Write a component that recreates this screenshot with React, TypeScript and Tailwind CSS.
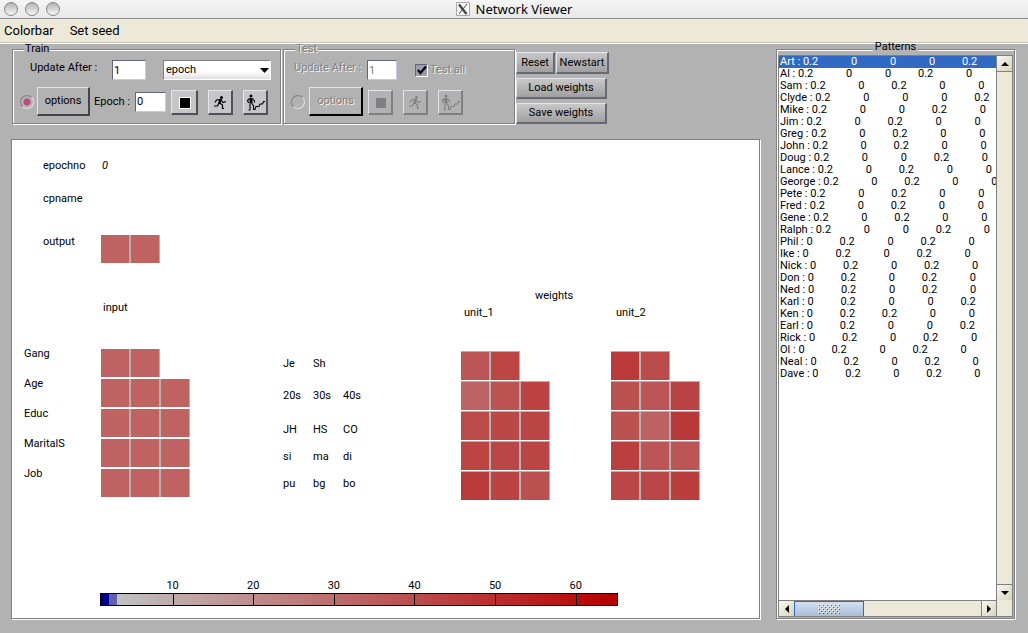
import React, { useState } from 'react';
import clsx from 'clsx';

const patterns: { name: string; values: string[] }[] = [
  { name: 'Art', values: ['0.2', '0', '0', '0', '0.2'] },
  { name: 'Al', values: ['0.2', '0', '0', '0.2', '0'] },
  { name: 'Sam', values: ['0.2', '0', '0.2', '0', '0'] },
  { name: 'Clyde', values: ['0.2', '0', '0', '0', '0.2'] },
  { name: 'Mike', values: ['0.2', '0', '0', '0.2', '0'] },
  { name: 'Jim', values: ['0.2', '0', '0.2', '0', '0'] },
  { name: 'Greg', values: ['0.2', '0', '0.2', '0', '0'] },
  { name: 'John', values: ['0.2', '0', '0.2', '0', '0'] },
  { name: 'Doug', values: ['0.2', '0', '0', '0.2', '0'] },
  { name: 'Lance', values: ['0.2', '0', '0.2', '0', '0'] },
  { name: 'George', values: ['0.2', '0', '0.2', '0', '0'] },
  { name: 'Pete', values: ['0.2', '0', '0.2', '0', '0'] },
  { name: 'Fred', values: ['0.2', '0', '0.2', '0', '0'] },
  { name: 'Gene', values: ['0.2', '0', '0.2', '0', '0'] },
  { name: 'Ralph', values: ['0.2', '0', '0', '0.2', '0'] },
  { name: 'Phil', values: ['0', '0.2', '0', '0.2', '0'] },
  { name: 'Ike', values: ['0', '0.2', '0', '0.2', '0'] },
  { name: 'Nick', values: ['0', '0.2', '0', '0.2', '0'] },
  { name: 'Don', values: ['0', '0.2', '0', '0.2', '0'] },
  { name: 'Ned', values: ['0', '0.2', '0', '0.2', '0'] },
  { name: 'Karl', values: ['0', '0.2', '0', '0', '0.2'] },
  { name: 'Ken', values: ['0', '0.2', '0.2', '0', '0'] },
  { name: 'Earl', values: ['0', '0.2', '0', '0', '0.2'] },
  { name: 'Rick', values: ['0', '0.2', '0', '0.2', '0'] },
  { name: 'Ol', values: ['0', '0.2', '0', '0.2', '0'] },
  { name: 'Neal', values: ['0', '0.2', '0', '0.2', '0'] },
  { name: 'Dave', values: ['0', '0.2', '0', '0.2', '0'] },
];

const REST = '#be6362';

const inputUnits = [
  [REST, REST],
  [REST, REST, REST],
  [REST, REST, REST],
  [REST, REST, REST],
  [REST, REST, REST],
];

const unit1 = [
  ['#bc5556', '#bd4645'],
  ['#bd6363', '#bc5251', '#bb4142'],
  ['#bb4b4b', '#bb4747', '#bb4545'],
  ['#bc4544', '#bb4647', '#bb4444'],
  ['#ba3b3b', '#bb4243', '#bb5050'],
];

const unit2 = [
  ['#b93a39', '#bb4b4b'],
  ['#bb5051', '#bc5556', '#ba4243'],
  ['#bb5252', '#bc6262', '#b93938'],
  ['#ba4040', '#bc5555', '#bc5556'],
  ['#bb4647', '#bb4647', '#ba3e3e'],
];

const groups = ['Gang', 'Age', 'Educ', 'MaritalS', 'Job'];

const unitNames = [
  { names: ['Je', 'Sh'], height: 'h-8' },
  { names: ['20s', '30s', '40s'], height: 'h-[34px]' },
  { names: ['JH', 'HS', 'CO'], height: 'h-[27px]' },
  { names: ['si', 'ma', 'di'], height: 'h-[27px]' },
  { names: ['pu', 'bg', 'bo'], height: 'h-[27px]' },
];

const COLORS = 64;
const ticks = [10, 20, 30, 40, 50, 60];

// two blue entries for negative values, then grey fading to red
const colorAt = (i: number) => {
  if (i === 0) return '#000090';
  if (i === 1) return '#6060ac';
  const t = (i - 2) / (COLORS - 3);
  const fade = Math.round(192 * (1 - t));
  return `rgb(${Math.round(192 - 8 * t)}, ${fade}, ${fade})`;
};

const Matrix: React.FC<{ rows: string[][]; topLine?: boolean }> = ({ rows, topLine }) => (
  <div className={clsx('flex flex-col items-start', topLine ? 'gap-px' : 'gap-0.5')}>
    {rows.map((row, r) => (
      <div
        key={r}
        className={clsx('flex gap-0.5 bg-[#b2b2b2] pr-px', topLine && 'border-t border-[#b2b2b2]')}
      >
        {row.map((color, c) => (
          <div key={c} className="size-7" style={{ backgroundColor: color }} />
        ))}
      </div>
    ))}
  </div>
);

const StopIcon = () => (
  <svg className="size-[19px]" viewBox="0 0 19 19" shapeRendering="crispEdges" aria-hidden="true">
    <path d="M4 4h12v12H4z" fill="#fff" className="group-disabled:opacity-0" />
    <path d="M5 5h10v10H5z" fill="currentColor" />
  </svg>
);

const RunIcon = () => (
  <svg className="size-[17px]" viewBox="0 0 17 17" aria-hidden="true">
    <circle cx="9.5" cy="3.500" r="1.5" fill="currentColor" />
    <path
      d="M8 5.500L4.500 6L3 8.500M9 6L11 8.500L14 7.500M7.500 9L10.500 11V14.500H12M7 9L5.500 11.800L2 12"
      fill="none"
      stroke="currentColor"
      strokeWidth="1.2"
    />
    <path d="M7 5h2.800l-1.300 5H6.200z" fill="currentColor" />
  </svg>
);

const StepIcon = () => (
  <svg className="size-[21px]" viewBox="0 0 21 21" aria-hidden="true">
    <circle cx="6" cy="4" r="1.5" fill="currentColor" />
    <path d="M4.500 6h3v5.500h-3z" fill="currentColor" />
    <path
      d="M4.500 6.500L2.500 8.500L3.500 11M7.500 6.500L9.500 9V10.500M5 11.500V18H3.500M7 11.500L8.500 14V17.500H10.500"
      fill="none"
      stroke="currentColor"
      strokeWidth="1.1"
    />
    <path
      d="M10 17L11 14.500H14L15 12H17.500L18.500 9.500H20"
      fill="none"
      stroke="currentColor"
      strokeWidth="1.1"
    />
  </svg>
);

const raised =
  'border-t border-l border-r-2 border-b-2 border-t-[#e4e4ee] border-l-[#e4e4ee] flex items-center justify-center';
const inputStyle =
  'h-5 border bg-white px-px text-[11px] outline-none border-t-[#62667c] border-l-[#62667c] border-r-[#c4c9e4] border-b-[#c4c9e4] disabled:text-[#808080]';
const groupBox = 'h-20 shrink-0 border border-[#808080] pl-[7px] shadow-[inset_1px_1px_0_#fff,1px_1px_0_#fff]';
const legendStyle = 'ml-1 h-2.5 bg-[#b2b2b2] px-px leading-2.5';
const radioStyle =
  'size-3.5 appearance-none rounded-full border border-[#808080] border-r-[#e0e0e0] border-b-[#e0e0e0] checked:bg-[radial-gradient(circle,#c04a7c_3px,#b2b2b2_4px)] disabled:border-[#808080]';
const ghost = 'text-[#808080] [text-shadow:1px_1px_0_#f4f4f4]';

const IconButton: React.FC<{
  label: string;
  wide?: boolean;
  disabled?: boolean;
  children: React.ReactNode;
}> = ({ label, wide, disabled, children }) => (
  <button
    type="button"
    aria-label={label}
    disabled={disabled}
    className={clsx(
      raised,
      'group h-[25px] border-r-[#50505c] border-b-[#50505c] bg-[#c6c6c8] text-black disabled:border-r-[#808080] disabled:border-b-[#808080] disabled:bg-[#b2b2b2] disabled:text-[#808080]',
      wide ? 'w-[27px]' : 'w-[25px]'
    )}
  >
    {children}
  </button>
);

const ActionButton: React.FC<{ className: string; children: React.ReactNode }> = ({
  className,
  children,
}) => (
  <button
    type="button"
    className={clsx(
      raised,
      'border-r-[#666874] border-b-[#666874] bg-linear-to-b from-[#c8c8c8] to-[#a0a0a0]',
      className
    )}
  >
    {children}
  </button>
);

const TitleBar = () => (
  <header className="flex h-[19px] items-center border-b border-[#8c8c8c] bg-linear-to-b from-[#f4f4f4] to-[#e8e8e8] px-1">
    <div className="flex flex-1 gap-[7px]">
      {['Close', 'Minimize', 'Zoom'].map((name) => (
        <button
          key={name}
          type="button"
          aria-label={name}
          className="size-3.5 rounded-full border border-[#858585] bg-linear-to-b from-[#b4b4b4] to-[#f8f8f8]"
        />
      ))}
    </div>
    <div className="flex items-center gap-1.5">
      <svg className="size-3.5" viewBox="0 0 14 14" aria-hidden="true">
        <path d="M.5.5h13v13H.5z" fill="#f6f6f6" stroke="#a8a8a8" />
        <path d="M3 2.500L10.500 12" stroke="#444" strokeWidth="2.400" />
        <path d="M11 2L3 12" stroke="#444" />
      </svg>
      <h1 className="font-['Noto_Sans',sans-serif] text-[13px] leading-4">Network Viewer</h1>
    </div>
    <div className="flex-1" />
  </header>
);

const TrainPanel = () => {
  const [updateAfter, setUpdateAfter] = useState('1');
  const [epoch, setEpoch] = useState('0');

  return (
    <fieldset className={clsx(groupBox, 'w-[269px]')}>
      <legend className={legendStyle}>Train</legend>
      <div className="flex items-center pt-1.5 pl-2.5">
        <label htmlFor="train-update" className="w-[82px] pb-1">
          Update After :
        </label>
        <input
          id="train-update"
          value={updateAfter}
          onChange={(e) => setUpdateAfter(e.target.value)}
          className={clsx(inputStyle, 'w-[34px]')}
        />
        <div className="relative ml-[17px]">
          <select
            aria-label="Update unit"
            className="block h-5 w-[108px] appearance-none border border-t-[#808080] border-l-[#808080] border-r-white border-b-white bg-linear-to-b from-white from-60% to-[#dedede] px-0.5 text-[11px]"
          >
            <option>epoch</option>
            <option>pattern</option>
          </select>
          <svg
            className="pointer-events-none absolute top-2 right-0.5 h-[5px] w-[9px]"
            viewBox="0 0 9 5"
            aria-hidden="true"
          >
            <path d="M0 0h9L4.500 5z" />
          </svg>
        </div>
      </div>
      <div className="mt-[7px] flex items-center">
        <input type="radio" name="mode" aria-label="Train mode" defaultChecked className={radioStyle} />
        <button
          type="button"
          className={clsx(raised, 'ml-[3px] h-[29px] w-[53px] border-r-[#44444c] border-b-[#44444c]')}
        >
          options
        </button>
        <label htmlFor="train-epoch" className="ml-1 w-[41px] whitespace-nowrap">
          Epoch :
        </label>
        <input
          id="train-epoch"
          value={epoch}
          onChange={(e) => setEpoch(e.target.value)}
          className={clsx(inputStyle, 'w-[31px]')}
        />
        <div className="mt-0.5 ml-[5px] flex gap-2.5">
          <IconButton label="Stop" wide>
            <StopIcon />
          </IconButton>
          <IconButton label="Run">
            <RunIcon />
          </IconButton>
          <IconButton label="Step">
            <StepIcon />
          </IconButton>
        </div>
      </div>
    </fieldset>
  );
};

const TestPanel = () => (
  <fieldset className={clsx(groupBox, 'ml-0.5 w-[232px]')}>
    <legend className={clsx(legendStyle, ghost)}>Test</legend>
    <div className="flex items-center pt-1.5 pl-[3px]">
      <label htmlFor="test-update" className={clsx('w-[73px] pb-1', ghost)}>
        Update After :
      </label>
      <input id="test-update" defaultValue="1" disabled className={clsx(inputStyle, 'w-[30px]')} />
      <label className={clsx('relative ml-[18px] flex items-center gap-0.5', ghost)}>
        <input
          type="checkbox"
          defaultChecked
          disabled
          className="peer size-[13px] appearance-none border border-[#62667c] border-r-white border-b-white bg-[#9a9eae]"
        />
        <svg
          className="pointer-events-none absolute left-0.5 hidden size-[10px] peer-checked:block"
          viewBox="0 0 10 10"
          aria-hidden="true"
        >
          <path d="M1 5L3.500 8L9 1.500" fill="none" stroke="#000" strokeWidth="2.400" />
        </svg>
        Test all
      </label>
    </div>
    <div className="mt-[7px] flex items-center">
      <input type="radio" name="mode" aria-label="Test mode" className={radioStyle} />
      <button
        type="button"
        disabled
        className={clsx(raised, ghost, 'ml-1 h-[29px] w-[54px] border-r-black border-b-black')}
      >
        options
      </button>
      <div className="mt-0.5 ml-[5px] flex gap-2.5">
        <IconButton label="Stop test" disabled>
          <StopIcon />
        </IconButton>
        <IconButton label="Run test" disabled>
          <RunIcon />
        </IconButton>
        <IconButton label="Step test" disabled>
          <StepIcon />
        </IconButton>
      </div>
    </div>
  </fieldset>
);

const ColorBar = () => (
  <div className="mt-auto mr-[141px] mb-3 ml-[88px]">
    <div className="grid grid-cols-[repeat(64,minmax(0,1fr))] pr-0.5">
      {ticks.map((tick) => (
        <span
          key={tick}
          className="row-start-1 flex h-[13px] justify-center leading-3"
          style={{ gridColumn: `${tick - 2} / ${tick + 2}` }}
        >
          {tick}
        </span>
      ))}
    </div>
    <div className="grid h-[13px] grid-cols-[repeat(64,minmax(0,1fr))] border border-black">
      {Array.from({ length: COLORS }, (_, i) => (
        <div
          key={i}
          className={clsx(ticks.includes(i + 2) && 'border-r border-black')}
          style={{ backgroundColor: colorAt(i) }}
        />
      ))}
    </div>
  </div>
);

const NetworkCanvas = () => (
  <section className="mt-[15px] flex flex-1 flex-col border border-[#808080] bg-white shadow-[1px_1px_0_#fff]">
    <div className="flex flex-col pt-5 pl-[31px]">
      <div className="flex">
        <span className="w-[59px]">epochno</span>
        <span className="italic">0</span>
      </div>
      <div className="mt-[21px]">cpname</div>
      <div className="mt-[30px] flex items-start">
        <span className="w-[58px] pt-px">output</span>
        <Matrix rows={[[REST, REST]]} />
      </div>
    </div>

    <div className="flex pl-3">
      <div className="w-[77px] shrink-0 pt-[85px]">
        {groups.map((group) => (
          <div key={group} className="h-[30px]">
            {group}
          </div>
        ))}
      </div>
      <div className="w-[182px] shrink-0 pt-[39px]">
        <h2 className="mb-[35px] pl-0.5">input</h2>
        <Matrix rows={inputUnits} />
      </div>
      <div className="w-[178px] shrink-0 pt-[95px]">
        {unitNames.map((row) => (
          <div key={row.names[0]} className={clsx('flex', row.height)}>
            {row.names.map((name) => (
              <span key={name} className="w-[30px]">
                {name}
              </span>
            ))}
          </div>
        ))}
      </div>
      <div className="shrink-0 pt-[27px]">
        <h2 className="pl-[74px]">weights</h2>
        <div className="mt-[5px] flex">
          <div className="w-[150px]">
            <h3 className="mb-8 pl-[3px]">unit_1</h3>
            <Matrix rows={unit1} topLine />
          </div>
          <div>
            <h3 className="mb-8 pl-[5px]">unit_2</h3>
            <Matrix rows={unit2} topLine />
          </div>
        </div>
      </div>
    </div>

    <ColorBar />
  </section>
);

const scrollButton =
  'flex shrink-0 items-center justify-center bg-linear-to-br from-[#f8f7f0] to-[#d8d4c0]';

const Arrow: React.FC<{ d: string }> = ({ d }) => (
  <svg className="size-2" viewBox="0 0 8 8" aria-hidden="true">
    <path d={d} />
  </svg>
);

const PatternList = () => {
  const [selected, setSelected] = useState('Art');

  return (
    <fieldset className="flex w-[239px] shrink-0 flex-col border border-[#808080] p-px shadow-[inset_1px_1px_0_#fff,1px_1px_0_#fff]">
      <legend className="mx-auto h-2.5 bg-[#b2b2b2] px-0.5 leading-1.5">Patterns</legend>
      <div className="flex flex-1 flex-col border border-[#808080] bg-[#ece9d8]">
        <div className="flex flex-1">
          <ul role="listbox" aria-label="Patterns" className="w-0 flex-1 overflow-hidden bg-white">
            {patterns.map(({ name, values }) => (
              <li
                key={name}
                role="option"
                aria-selected={selected === name}
                onClick={() => setSelected(name)}
                className={clsx(
                  'flex h-3 pl-px whitespace-pre',
                  selected === name && 'bg-[#316ac5] text-white'
                )}
              >
                <span>{`${name} : `}</span>
                {values.map((value, i) => (
                  <span
                    key={i}
                    className={clsx(
                      'shrink-0',
                      value === '0' ? 'w-1.5' : 'w-[15px]',
                      i > 0 && (value === '0' ? 'ml-[33px]' : 'ml-[27px]')
                    )}
                  >
                    {value}
                  </span>
                ))}
              </li>
            ))}
          </ul>
          <div className="flex w-4 flex-col justify-between border-l border-[#808080]">
            <button type="button" aria-label="Scroll up" className={clsx(scrollButton, 'h-4 border-b border-[#808080]')}>
              <Arrow d="M0 6L4 2L8 6z" />
            </button>
            <button type="button" aria-label="Scroll down" className={clsx(scrollButton, 'h-4 border-t border-[#808080]')}>
              <Arrow d="M0 2L4 6L8 2z" />
            </button>
          </div>
        </div>
        <div className="flex h-4 pr-[15px]">
          <div className="flex flex-1 border-t border-r border-[#808080]">
            <button type="button" aria-label="Scroll left" className={clsx(scrollButton, 'w-[15px]')}>
              <Arrow d="M6 0L2 4L6 8z" />
            </button>
            <div className="flex w-[70px] items-center justify-center border border-b-0 border-[#316ac5] bg-linear-to-b from-[#d2dff0] to-[#a9bedb]">
              <svg className="h-2.5 w-[22px]" shapeRendering="crispEdges" aria-hidden="true">
                <defs>
                  <pattern id="grip" width="4" height="4" patternUnits="userSpaceOnUse">
                    <path d="M0 0h1v1H0zM2 2h1v1H2z" fill="#fff" />
                    <path d="M1 1h1v1H1zM3 3h1v1H3z" fill="#316ad8" />
                  </pattern>
                </defs>
                <rect width="22" height="10" fill="url(#grip)" />
              </svg>
            </div>
            <div className="flex-1" />
            <button
              type="button"
              aria-label="Scroll right"
              className={clsx(scrollButton, 'w-[15px] border-l border-[#808080]')}
            >
              <Arrow d="M2 0L6 4L2 8z" />
            </button>
          </div>
        </div>
      </div>
    </fieldset>
  );
};

const App: React.FC = () => {
  return (
    <div className="flex min-h-screen flex-col bg-[#b2b2b2] font-[Roboto,sans-serif] text-[11px] leading-3 text-black">
      <TitleBar />
      <nav className="flex h-6 items-center gap-4 border-b border-[#c8c6b8] bg-[#ece9d8] px-1 text-[13px] leading-4">
        <button type="button">Colorbar</button>
        <button type="button">Set seed</button>
      </nav>
      <main className="flex flex-1 gap-4 border-t border-white pr-[13px] pb-3.5 pl-[11px]">
        <div className="flex flex-1 flex-col">
          <div className="flex pl-px">
            <TrainPanel />
            <TestPanel />
            <div className="flex flex-col items-start gap-1 pt-2 pl-px">
              <div className="flex">
                <ActionButton className="h-[22px] w-[39px]">Reset</ActionButton>
                <ActionButton className="ml-px h-[22px] w-[53px]">Newstart</ActionButton>
              </div>
              <ActionButton className="h-[21px] w-[91px]">Load weights</ActionButton>
              <ActionButton className="h-[21px] w-[91px]">Save weights</ActionButton>
            </div>
          </div>
          <NetworkCanvas />
        </div>
        <PatternList />
      </main>
    </div>
  );
};

export default App;
